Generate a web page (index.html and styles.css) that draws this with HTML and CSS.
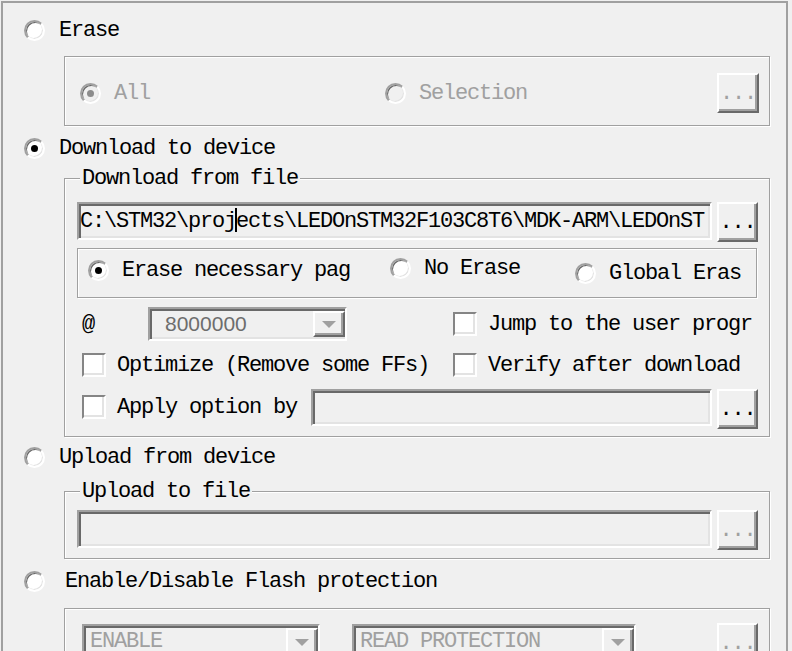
FILE: index.html
```html
<!DOCTYPE html>
<html lang="en">
<head>
    <meta charset="UTF-8">
    <title>Flash download options</title>
    <link rel="stylesheet" href="styles.css">
</head>
<body>
    <div class="panel">
        <div class="choice"><span class="radio"></span><span>Erase</span></div>
        <div class="etched erase-box">
            <div class="opt opt-all disabled"><span class="radio checked"></span><span>All</span></div>
            <div class="opt disabled"><span class="radio"></span><span>Selection</span></div>
            <div class="btn disabled">...</div>
        </div>

        <div class="choice"><span class="radio checked"></span><span>Download to device</span></div>
        <fieldset class="group">
            <legend>Download from file</legend>
            <div class="file-row">
                <div class="field path">C:\STM32\proj<span class="caret"></span>ects\LEDOnSTM32F103C8T6\MDK-ARM\LEDOnST</div>
                <div class="btn">...</div>
            </div>
            <div class="etched erase-mode">
                <div class="opt mode-pages"><span class="radio checked"></span><span>Erase necessary pag</span></div>
                <div class="opt mode-none"><span class="radio"></span><span>No Erase</span></div>
                <div class="opt mode-global"><span class="radio"></span><span>Global Eras</span></div>
            </div>
            <div class="opt-row row-addr">
                <div class="cell">
                    <span class="at">@</span>
                    <div class="combo combo-addr"><span class="combo-text">8000000</span><span class="drop"></span></div>
                </div>
                <div class="opt check-opt"><span class="check"></span><span>Jump to the user progr</span></div>
            </div>
            <div class="opt-row row-flags">
                <div class="cell">
                    <div class="opt check-opt"><span class="check"></span><span>Optimize (Remove some FFs)</span></div>
                </div>
                <div class="opt check-opt"><span class="check"></span><span>Verify after download</span></div>
            </div>
            <div class="opt-row row-apply">
                <div class="opt check-opt"><span class="check"></span><span class="apply-label">Apply option by</span></div>
                <div class="field"></div>
                <div class="btn">...</div>
            </div>
        </fieldset>

        <div class="choice choice-upload"><span class="radio"></span><span>Upload from device</span></div>
        <fieldset class="group group-upload">
            <legend>Upload to file</legend>
            <div class="file-row">
                <div class="field path"></div>
                <div class="btn disabled">...</div>
            </div>
        </fieldset>

        <div class="choice choice-wide"><span class="radio"></span><span>Enable/Disable Flash protection</span></div>
        <div class="etched protect-box">
            <div class="combo combo-enable"><span class="combo-text">ENABLE</span><span class="drop"></span></div>
            <div class="combo combo-read"><span class="combo-text">READ PROTECTION</span><span class="drop"></span></div>
            <div class="btn disabled">...</div>
        </div>
    </div>
</body>
</html>
```

FILE: styles.css
```css
body {
    margin: 0;
    background-color: #f0f0f0;
    font-family: "Liberation Mono", "DejaVu Sans Mono", monospace;
    font-size: 22px;
    letter-spacing: -1.2px;
    line-height: 24px;
    color: #000;
    overflow: hidden;
}
.panel {
    box-sizing: border-box;
    width: 787px;
    height: 700px;
    margin: 1px 0 0 1px;
    border: 2px solid #a0a0a0;
    border-bottom: none;
}
.choice {
    display: flex;
    align-items: center;
    gap: 14px;
    height: 24px;
    margin-top: 10px;
    padding-left: 21px;
}
.panel > .choice:first-child {
    margin-top: 15px;
}
.choice-upload {
    margin-top: 8px;
}
.choice-wide {
    gap: 20px;
    margin-top: 10px;
}
.choice > span:last-child,
.opt > span:last-child {
    padding-top: 2px;
    white-space: nowrap;
}
.radio {
    box-sizing: border-box;
    flex: none;
    display: flex;
    align-items: center;
    justify-content: center;
    width: 21px;
    height: 21px;
    border-radius: 50%;
    border: 2px solid;
    border-color: #a0a0a0 #fff #fff #a0a0a0;
    box-shadow: inset 1px 1px 0 #696969, inset -1px -1px 0 #e3e3e3;
    background: #fff;
}
.radio.checked::after {
    content: "";
    width: 7px;
    height: 7px;
    border-radius: 50%;
    background: #000;
}
.disabled {
    color: #a0a0a0;
}
.disabled .radio {
    background: #f0f0f0;
}
.disabled .radio.checked::after {
    background: #8c8c8c;
}
.check {
    box-sizing: border-box;
    flex: none;
    width: 24px;
    height: 24px;
    border: 2px solid;
    border-color: #858585 #fff #fff #858585;
    box-shadow: inset -2px -2px 0 #e3e3e3;
    background: #fff;
}
.etched {
    box-sizing: border-box;
    border: 1px solid #a0a0a0;
    box-shadow: inset 1px 1px 0 #fff, 1px 1px 0 #fff;
}
.opt {
    display: flex;
    align-items: center;
    gap: 13px;
    height: 24px;
    flex: none;
}
.check-opt {
    gap: 11px;
}
.btn {
    box-sizing: border-box;
    flex: none;
    width: 41px;
    height: 40px;
    border: 2px solid;
    border-color: #fff #696969 #696969 #fff;
    box-shadow: inset -2px -2px 0 #a0a0a0;
    text-align: center;
    line-height: 38px;
    color: #000;
}
.btn.disabled {
    color: #a0a0a0;
}
.field {
    box-sizing: border-box;
    flex: 1;
    height: 38px;
    border: 2px solid;
    border-color: #a0a0a0 #fff #fff #a0a0a0;
    box-shadow: inset 2px 2px 0 #696969, inset -2px -2px 0 #e3e3e3;
    background: #f0f0f0;
    padding-left: 1px;
    line-height: 36px;
    white-space: nowrap;
    overflow: hidden;
}
.caret {
    display: inline-block;
    width: 2px;
    height: 24px;
    margin: 0 -1px;
    vertical-align: -5px;
    background: #000;
}

/* erase group */
.erase-box {
    display: flex;
    align-items: center;
    width: 706px;
    height: 70px;
    margin: 14px 0 0 61px;
    padding: 16px 10px 12px 15px;
}
.opt-all {
    width: 305px;
}
.erase-box .btn {
    width: 42px;
    margin-left: auto;
}

/* file groups */
.group {
    box-sizing: border-box;
    width: 706px;
    min-width: 0;
    margin: 5px 0 0 61px;
    padding: 0 11px 7px 12px;
    border: 1px solid #a0a0a0;
    box-shadow: inset 1px 1px 0 #fff, 1px 1px 0 #fff;
}
.group legend {
    margin-left: 3px;
    padding: 2px 2px 0;
    line-height: 24px;
    background: #f0f0f0;
}
.file-row {
    display: flex;
    align-items: flex-start;
    gap: 5px;
    margin-top: 11px;
    height: 40px;
}
.group-upload {
    margin-top: 9px;
    padding-bottom: 8px;
}
.group-upload .file-row {
    margin-top: 6px;
}
.erase-mode {
    display: flex;
    align-items: flex-start;
    width: 680px;
    height: 50px;
    margin-top: 6px;
    padding-left: 10px;
}
.mode-pages {
    width: 302px;
    margin-top: 9px;
}
.mode-none {
    width: 185px;
    margin-top: 7px;
}
.mode-global {
    margin-top: 12px;
}
.opt-row {
    display: flex;
    align-items: center;
    margin-top: 12px;
    height: 24px;
}
.cell {
    display: flex;
    align-items: center;
    width: 376px;
    padding-left: 5px;
    box-sizing: border-box;
    flex: none;
}
.row-addr {
    margin-top: 9px;
    height: 34px;
}
.at {
    width: 12px;
    padding-top: 2px;
}
.row-apply {
    height: 40px;
    align-items: flex-start;
    padding-left: 5px;
}
.row-apply .opt {
    margin-top: 6px;
}
.apply-label {
    width: 190px;
    margin-right: 4px;
}
.row-apply .field {
    height: 37px;
}
.row-apply .btn {
    margin-left: 5px;
}

/* combos */
.combo {
    box-sizing: border-box;
    display: flex;
    flex: none;
    height: 36px;
    border: 2px solid;
    border-color: #a0a0a0 #fff #fff #a0a0a0;
    box-shadow: inset 2px 2px 0 #696969, inset -2px -2px 0 #e3e3e3;
    background: #f0f0f0;
    color: #a0a0a0;
}
.combo-text {
    flex: 1;
    padding: 4px 0 0 6px;
    white-space: nowrap;
    overflow: hidden;
}
.drop {
    box-sizing: border-box;
    display: flex;
    align-items: center;
    justify-content: center;
    flex: none;
    width: 32px;
    margin: 2px 0;
    border: 2px solid;
    border-color: #fff #696969 #696969 #fff;
    box-shadow: inset -2px -2px 0 #a0a0a0;
}
.drop::after {
    content: "";
    border-left: 7px solid transparent;
    border-right: 7px solid transparent;
    border-top: 7px solid #a0a0a0;
}
.combo-addr {
    width: 199px;
    height: 34px;
    margin-left: 54px;
}
.combo-addr .combo-text {
    font-family: "Liberation Sans", Arial, sans-serif;
    font-size: 21px;
    letter-spacing: 0;
    color: #6d6d6d;
    padding: 3px 0 0 15px;
}
.protect-box {
    display: flex;
    align-items: flex-start;
    width: 706px;
    height: 80px;
    margin: 15px 0 0 61px;
    padding: 14px 11px 0 17px;
}
.combo-enable {
    width: 238px;
    margin-top: 1px;
}
.combo-read {
    width: 284px;
    margin: 1px 0 0 32px;
}
.protect-box .btn {
    margin-left: auto;
}
```
